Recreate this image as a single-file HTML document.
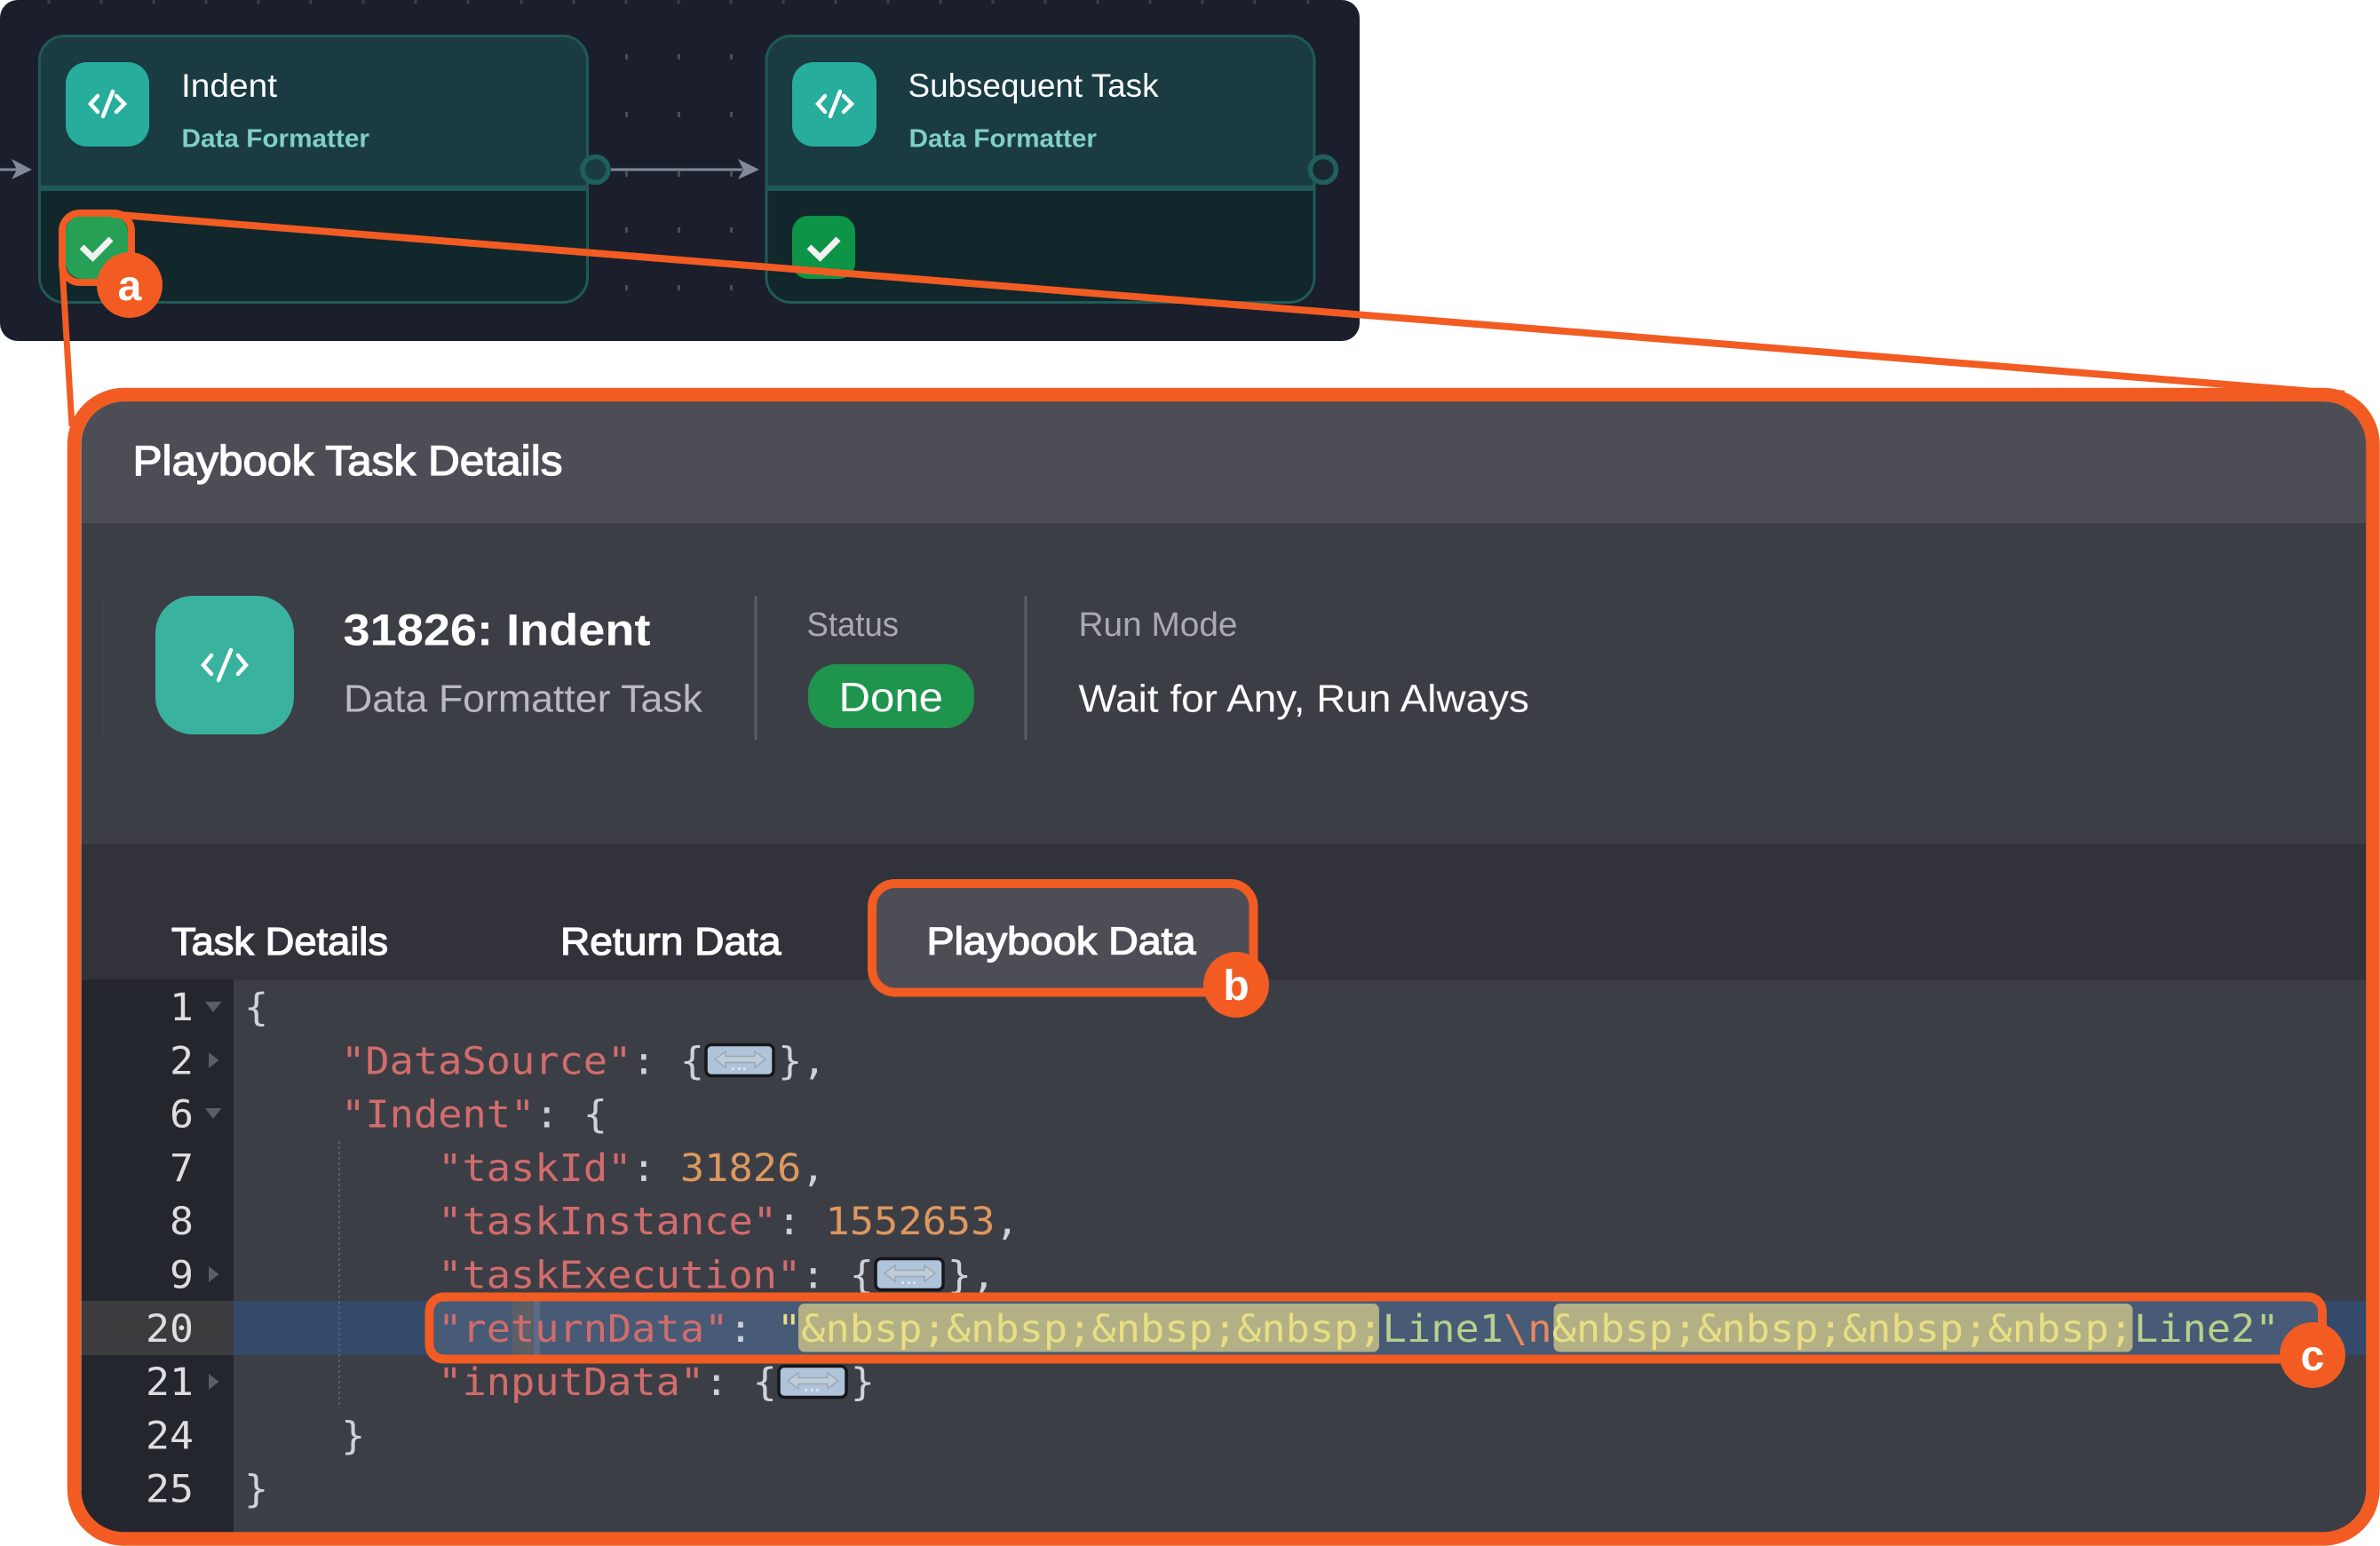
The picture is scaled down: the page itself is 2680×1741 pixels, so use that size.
<!DOCTYPE html>
<html lang="en"><head><meta charset="utf-8"><title>Playbook Task Details</title>
<style>
html,body{margin:0;padding:0;background:#fff}
svg{display:block}
.s{font-family:"Liberation Sans",sans-serif}
.m{font-family:"DejaVu Sans Mono","Liberation Mono",monospace;font-size:43px}
.k{fill:#d26c6c}.p{fill:#ced2d6}.n{fill:#dd985f}.y{fill:#e8de84}.g{fill:#b9cf8c}.e{fill:#e8885f}.l{fill:#dcdedf}
</style></head><body>
<svg xmlns="http://www.w3.org/2000/svg" width="2680" height="1741" viewBox="0 0 2680 1741">
<defs>
<clipPath id="inner"><rect x="91.5" y="452" width="2573.5" height="1274" rx="48"/></clipPath>
<g id="ph"><rect x="0" y="1.5" width="76" height="35" rx="6" fill="#b0c4d9" stroke="#15171c" stroke-width="3.5"/>
<path d="M10 18 22 9v5.500h33V9l12 9-12 9v-5.500H22v5.500z" fill="#c0ccd8" stroke="#98a8b8" stroke-width="1.500"/>
<path d="M29 27h3v3h-3zM36 27h3v3h-3zM42 27h3v3h-3z" fill="#dbe3ea"/></g>
<g id="code" fill="none" stroke="#fff" stroke-width="4.5" stroke-linecap="round" stroke-linejoin="miter"><path d="M110 108 102 117 110 126M131 108 140 117 131 126"/><path d="M127 103 116 131"/></g>
</defs>
<rect width="2680" height="1741" fill="#fff"/>

<!-- top panel -->
<rect x="0" y="0" width="1531" height="384" rx="20" fill="#1b1f2b"/>
<path d="M55 0v4M114 0v4M173 0v4M232 0v4M291 0v4M350 0v4M409 0v4M468 0v4M527 0v4M587 0v4M646 0v4M705 0v4M764 0v4M823 0v4M882 0v4M941 0v4M1000 0v4M1059 0v4M1118 0v4M1177 0v4M1236 0v4M1295 0v4M1354 0v4M1413 0v4M1473 0v4" stroke="#3c404a" stroke-width="3"/>
<path d="M705.5 61v6M764.5 61v6M823.5 61v6M705.5 126v6M764.5 126v6M823.5 126v6M705.5 193v6M764.5 193v6M823.5 193v6M705.5 256v6M764.5 256v6M823.5 256v6M705.5 321v6M764.5 321v6M823.5 321v6" stroke="#4a4e56" stroke-width="3"/>
<path d="M0 191H20" stroke="#828a97" stroke-width="3"/>
<path d="M13 179 36 191 13 202 19 191z" fill="#828a97"/>
<path d="M688 191H836" stroke="#828a97" stroke-width="3"/>
<path d="M831 179 855 191 831 202 837 191z" fill="#828a97"/>

<!-- node 1 -->
<rect x="44.5" y="40.5" width="617" height="300" rx="28" fill="#11272c"/>
<path d="M44.5 212V68.5a28 28 0 0 1 28-28h561a28 28 0 0 1 28 28V212z" fill="#1a3b42"/>
<rect x="44.5" y="40.5" width="617" height="300" rx="28" fill="none" stroke="#1f5a58" stroke-width="3"/>
<rect x="43" y="209" width="620" height="6" fill="#1f5a58"/>
<circle cx="670.5" cy="191" r="14.5" fill="#1a3b42" stroke="#1f5f5d" stroke-width="5.5"/>
<rect x="74" y="70" width="94" height="95" rx="24" fill="#26ad9b"/>
<use href="#code"/>
<text class="s" x="204" y="109" font-size="37" fill="#fff" textLength="108" lengthAdjust="spacingAndGlyphs">Indent</text>
<text class="s" x="204.500" y="165.5" font-size="29" font-weight="700" fill="#80d0c4" textLength="211.500" lengthAdjust="spacingAndGlyphs">Data Formatter</text>
<rect x="74" y="243" width="70" height="71" rx="18" fill="#25a055"/>
<path d="M92 278 104.5 290 125 269" fill="none" stroke="#f2f2f2" stroke-width="7"/>

<!-- node 2 -->
<rect x="863" y="40.5" width="617" height="300" rx="28" fill="#11272c"/>
<path d="M863 212V68.5a28 28 0 0 1 28-28h561a28 28 0 0 1 28 28V212z" fill="#1a3b42"/>
<rect x="863" y="40.5" width="617" height="300" rx="28" fill="none" stroke="#1f5a58" stroke-width="3"/>
<rect x="861.5" y="209" width="620" height="6" fill="#1f5a58"/>
<circle cx="1490" cy="191" r="14.5" fill="#1a2730" stroke="#1f5f5d" stroke-width="5.5"/>
<rect x="892" y="70" width="95" height="95" rx="24" fill="#26ad9b"/>
<use href="#code" x="819"/>
<text class="s" x="1022.5" y="109" font-size="37" fill="#fff" textLength="282" lengthAdjust="spacingAndGlyphs">Subsequent Task</text>
<text class="s" x="1023.5" y="165.5" font-size="29" font-weight="700" fill="#80d0c4" textLength="211.500" lengthAdjust="spacingAndGlyphs">Data Formatter</text>
<rect x="892" y="243" width="71" height="71" rx="18" fill="#0d9447"/>
<path d="M911 278 923.5 290 944 269" fill="none" stroke="#f2f2f2" stroke-width="7"/>

<!-- callout lines -->
<path d="M125 241.2 2640 443.7" stroke="#f25c22" stroke-width="8" fill="none"/>
<path d="M70 300 81 480" stroke="#f25c22" stroke-width="7" fill="none"/>
<rect x="70" y="240" width="78" height="78" rx="20" fill="none" stroke="#f25c22" stroke-width="8"/>

<!-- main panel -->
<g clip-path="url(#inner)">
<rect x="91" y="452" width="2575" height="137" fill="#4d4d56"/>
<rect x="91" y="589" width="2575" height="362" fill="#3c3e46"/>
<rect x="91" y="950.5" width="2575" height="153" fill="#31323a"/>
<rect x="91" y="1103" width="2575" height="623" fill="#3c3e46"/>
<rect x="91" y="1103" width="172" height="623" fill="#24262e"/>
<rect x="91" y="1465" width="172" height="61" fill="#3c3c3e"/>
<rect x="263" y="1465" width="2403" height="61" fill="#344a6b"/>
<rect x="489" y="1465" width="2121" height="61" fill="#475a76"/>
<rect x="577" y="1465" width="24" height="61" rx="6" fill="#5d5f68"/>
<rect x="601" y="1465" width="7" height="61" fill="#5a6b85"/>
</g>

<!-- info row -->
<path d="M116.5 671V827" stroke="#42444c" stroke-width="2"/>
<rect x="175" y="671" width="156" height="156" rx="42" fill="#3ab2a0"/>
<g fill="none" stroke="#fff" stroke-width="4.5" stroke-linecap="round"><path d="M238 738 229 749 238 759M268 738 277 749 268 759"/><path d="M260 732 246 766"/></g>
<path d="M851 671V833M1155 671V833" stroke="#5c5e66" stroke-width="3"/>

<text class="s" x="149.500" y="535" font-size="47" fill="#fff" stroke="#fff" stroke-width="1.300" textLength="484" lengthAdjust="spacingAndGlyphs">Playbook Task Details</text>
<text class="s" x="386.5" y="726.5" font-size="50" font-weight="700" fill="#fff" textLength="346" lengthAdjust="spacingAndGlyphs">31826: Indent</text>
<text class="s" x="387" y="801.5" font-size="44" fill="#b9bbc0" textLength="404" lengthAdjust="spacingAndGlyphs">Data Formatter Task</text>
<text class="s" x="908.500" y="716" font-size="38" fill="#a9abb1" textLength="103.500" lengthAdjust="spacingAndGlyphs">Status</text>
<text class="s" x="1214.500" y="716" font-size="38" fill="#a9abb1" textLength="179" lengthAdjust="spacingAndGlyphs">Run Mode</text>
<rect x="910" y="748" width="187" height="72" rx="32" fill="#1f944d"/>
<text class="s" x="944.500" y="801" font-size="46" fill="#fff" textLength="117.500" lengthAdjust="spacingAndGlyphs">Done</text>
<text class="s" x="1214.5" y="801.5" font-size="44" fill="#fff" textLength="507.500" lengthAdjust="spacingAndGlyphs">Wait for Any, Run Always</text>

<!-- tabs -->
<text class="s" x="193" y="1075" font-size="44" fill="#fff" stroke="#fff" stroke-width="1.300" textLength="244" lengthAdjust="spacingAndGlyphs">Task Details</text>
<text class="s" x="631" y="1075" font-size="44" fill="#fff" stroke="#fff" stroke-width="1.300" textLength="248.500" lengthAdjust="spacingAndGlyphs">Return Data</text>
<rect x="982" y="995" width="429.5" height="122.5" rx="26" fill="#4d4d56" stroke="#f25c22" stroke-width="10"/>
<text class="s" x="1043.500" y="1074.5" font-size="44" fill="#fff" stroke="#fff" stroke-width="1.300" textLength="303" lengthAdjust="spacingAndGlyphs">Playbook Data</text>

<!-- line numbers -->
<g class="m">
<text class="l" x="191" y="1149" textLength="27" lengthAdjust="spacingAndGlyphs">1</text>
<text class="l" x="191" y="1209.3" textLength="27" lengthAdjust="spacingAndGlyphs">2</text>
<text class="l" x="191" y="1269.6" textLength="27" lengthAdjust="spacingAndGlyphs">6</text>
<text class="l" x="191" y="1330" textLength="27" lengthAdjust="spacingAndGlyphs">7</text>
<text class="l" x="191" y="1390" textLength="27" lengthAdjust="spacingAndGlyphs">8</text>
<text class="l" x="191" y="1450.5" textLength="27" lengthAdjust="spacingAndGlyphs">9</text>
<text class="l" x="164" y="1511" textLength="54" lengthAdjust="spacingAndGlyphs">20</text>
<text class="l" x="164" y="1571" textLength="54" lengthAdjust="spacingAndGlyphs">21</text>
<text class="l" x="164" y="1631.4" textLength="54" lengthAdjust="spacingAndGlyphs">24</text>
<text class="l" x="164" y="1691.7" textLength="54" lengthAdjust="spacingAndGlyphs">25</text>
</g>
<!-- fold markers -->
<path d="M231 1128H249.5L240 1140zM231 1248H249.5L240 1260zM235 1185 246.5 1194 235 1203zM235 1426 246.5 1435 235 1444zM235 1547 246.5 1556 235 1565z" fill="#5b5e66"/>
<!-- indent guide -->
<path d="M382 1285V1586" stroke="#5c5e66" stroke-width="2" stroke-dasharray="3 3"/>
<!-- yellow highlights -->
<rect x="899" y="1468" width="654" height="54.5" rx="7" fill="#b2b084"/>
<rect x="1749.5" y="1468" width="652" height="54.5" rx="7" fill="#b2b084"/>

<!-- code -->
<g class="m" transform="translate(2 0)">
<text class="p" x="273" y="1149" textLength="27.27" lengthAdjust="spacingAndGlyphs">{</text>

<text class="k" x="382.1" y="1209.3" textLength="327.2" lengthAdjust="spacingAndGlyphs">"DataSource"</text>
<text class="p" x="709.3" y="1209.3" textLength="81.8" lengthAdjust="spacingAndGlyphs">: {</text>
<text class="p" x="874" y="1209.3" textLength="54.5" lengthAdjust="spacingAndGlyphs">},</text>

<text class="k" x="382.1" y="1269.6" textLength="218.2" lengthAdjust="spacingAndGlyphs">"Indent"</text>
<text class="p" x="600.2" y="1269.6" textLength="81.8" lengthAdjust="spacingAndGlyphs">: {</text>

<text class="k" x="491.2" y="1330" textLength="218.2" lengthAdjust="spacingAndGlyphs">"taskId"</text>
<text class="p" x="709.3" y="1330" textLength="27.27" lengthAdjust="spacingAndGlyphs">:</text>
<text class="n" x="763.9" y="1330" textLength="136.4" lengthAdjust="spacingAndGlyphs">31826</text>
<text class="p" x="900.2" y="1330" textLength="27.27" lengthAdjust="spacingAndGlyphs">,</text>

<text class="k" x="491.2" y="1390" textLength="381.8" lengthAdjust="spacingAndGlyphs">"taskInstance"</text>
<text class="p" x="873" y="1390" textLength="27.27" lengthAdjust="spacingAndGlyphs">:</text>
<text class="n" x="927.5" y="1390" textLength="190.9" lengthAdjust="spacingAndGlyphs">1552653</text>
<text class="p" x="1118.4" y="1390" textLength="27.27" lengthAdjust="spacingAndGlyphs">,</text>

<text class="k" x="491.2" y="1450.5" textLength="409" lengthAdjust="spacingAndGlyphs">"taskExecution"</text>
<text class="p" x="900.2" y="1450.5" textLength="81.8" lengthAdjust="spacingAndGlyphs">: {</text>
<text class="p" x="1064.8" y="1450.5" textLength="54.5" lengthAdjust="spacingAndGlyphs">},</text>

<text class="k" x="491.2" y="1511" textLength="327.2" lengthAdjust="spacingAndGlyphs">"returnData"</text>
<text class="p" x="818.4" y="1511" textLength="27.27" lengthAdjust="spacingAndGlyphs">:</text>
<text class="y" x="872.9" y="1511" textLength="27.27" lengthAdjust="spacingAndGlyphs">"</text>
<text class="y" x="900.2" y="1511" textLength="654.5" lengthAdjust="spacingAndGlyphs">&amp;nbsp;&amp;nbsp;&amp;nbsp;&amp;nbsp;</text>
<text class="g" x="1554.7" y="1511" textLength="136.4" lengthAdjust="spacingAndGlyphs">Line1</text>
<text class="e" x="1691" y="1511" textLength="54.5" lengthAdjust="spacingAndGlyphs">\n</text>
<text class="y" x="1745.6" y="1511" textLength="654.5" lengthAdjust="spacingAndGlyphs">&amp;nbsp;&amp;nbsp;&amp;nbsp;&amp;nbsp;</text>
<text class="g" x="2401" y="1511" textLength="163.6" lengthAdjust="spacingAndGlyphs">Line2"</text>

<text class="k" x="491.2" y="1571" textLength="300" lengthAdjust="spacingAndGlyphs">"inputData"</text>
<text class="p" x="791.1" y="1571" textLength="81.8" lengthAdjust="spacingAndGlyphs">: {</text>
<text class="p" x="955.8" y="1571" textLength="27.27" lengthAdjust="spacingAndGlyphs">}</text>

<text class="p" x="382.1" y="1631.4" textLength="27.27" lengthAdjust="spacingAndGlyphs">}</text>
<text class="p" x="273" y="1691.7" textLength="27.27" lengthAdjust="spacingAndGlyphs">}</text>
</g>
<use href="#ph" x="795" y="1175"/>
<use href="#ph" x="986" y="1416"/>
<use href="#ph" x="877" y="1537"/>

<!-- orange outlines -->
<rect x="83.5" y="444.5" width="2588.5" height="1288.5" rx="56" fill="none" stroke="#f25c22" stroke-width="15.5"/>
<rect x="483.5" y="1460.5" width="2131.5" height="70" rx="16" fill="none" stroke="#f25c22" stroke-width="10"/>

<!-- badges -->
<circle cx="146" cy="321" r="37" fill="#f25c22"/>
<text class="s" x="146" y="338" font-size="48" font-weight="700" fill="#fff" text-anchor="middle">a</text>
<circle cx="1392" cy="1109" r="37" fill="#f25c22"/>
<text class="s" x="1392" y="1126" font-size="48" font-weight="700" fill="#fff" text-anchor="middle">b</text>
<circle cx="2604" cy="1526" r="37" fill="#f25c22"/>
<text class="s" x="2604" y="1543" font-size="48" font-weight="700" fill="#fff" text-anchor="middle">c</text>
</svg>
</body></html>
